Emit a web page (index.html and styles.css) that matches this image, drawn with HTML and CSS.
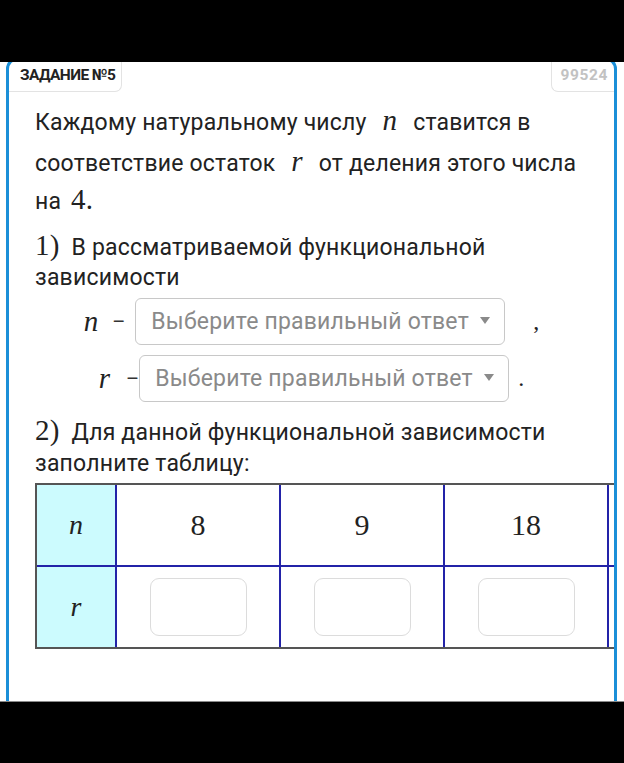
FILE: index.html
```html
<!DOCTYPE html>
<html lang="ru">
<head>
    <meta charset="UTF-8">
    <meta name="viewport" content="width=device-width, initial-scale=1.0">
    <title>Задание №5</title>
    <link rel="stylesheet" href="styles.css">
</head>
<body>
    <div class="bar bar-top"></div>

    <div class="task-card">
        <div class="task-head">
            <span class="task-tag">ЗАДАНИЕ №5</span>
            <span class="task-id">99524</span>
        </div>

        <p class="task-text">
            Каждому натуральному числу <span class="math">n</span> ставится в
            соответствие остаток <span class="math">r</span> от деления этого числа
            на <span class="num">4.</span>
        </p>

        <p class="task-part"><span class="num">1)</span> В рассматриваемой функциональной зависимости</p>

        <div class="answer-row">
            <span class="math">n</span>
            <span class="dash">–</span>
            <div class="select-box">
                <span>Выберите правильный ответ</span>
                <span class="arrow"></span>
            </div>
            <span class="punct">,</span>
        </div>
        <div class="answer-row row-r">
            <span class="math">r</span>
            <span class="dash">–</span>
            <div class="select-box">
                <span>Выберите правильный ответ</span>
                <span class="arrow"></span>
            </div>
            <span class="punct">.</span>
        </div>

        <p class="task-part part-two"><span class="num">2)</span> Для данной функциональной зависимости заполните таблицу:</p>

        <table class="value-table">
            <tr>
                <th><span class="math">n</span></th>
                <td class="num">8</td>
                <td class="num">9</td>
                <td class="num">18</td>
                <td class="num"></td>
            </tr>
            <tr>
                <th><span class="math">r</span></th>
                <td><input type="text" class="cell-input"></td>
                <td><input type="text" class="cell-input"></td>
                <td><input type="text" class="cell-input"></td>
                <td><input type="text" class="cell-input"></td>
            </tr>
        </table>
    </div>

    <div class="bar bar-bottom"></div>
</body>
</html>
```

FILE: styles.css
```css
html, body {
    margin: 0;
    padding: 0;
    background-color: #fff;
}
body {
    font-family: Roboto, "Noto Sans", sans-serif;
    color: #222;
    height: 763px;
    overflow: hidden;
    position: relative;
}
.bar {
    position: absolute;
    left: 0;
    right: 0;
    background-color: #000;
    z-index: 5;
}
.bar-top {
    top: 0;
    height: 62px;
}
.bar-bottom {
    top: 701px;
    height: 62px;
    border-top: 1px solid #8a8a8a;
}
.task-card {
    margin: 57px 7px 0 6px;
    height: 700px;
    border: 3px solid #1b8fd8;
    border-radius: 12px;
    padding: 0 0 0 26px;
    overflow: hidden;
    box-sizing: border-box;
}
.task-head {
    display: flex;
    justify-content: space-between;
    margin-left: -26px;
    height: 32px;
}
.task-tag,
.task-id {
    font-family: Roboto, "Noto Sans", sans-serif;
    font-weight: bold;
    font-size: 15.5px;
    line-height: 31px;
    border: 1px solid #e3e3e3;
    border-top: none;
}
.task-tag {
    letter-spacing: -0.6px;
    padding: 0 6px 0 11px;
    border-left: none;
    border-bottom-right-radius: 7px;
}
.task-id {
    color: #c2c2c2;
    letter-spacing: 0.6px;
    border-right: none;
    border-bottom-left-radius: 7px;
    padding: 0 6px 0 9px;
}
.task-text {
    margin: 9px 26px 0 0;
    font-size: 23px;
    letter-spacing: 0.2px;
    line-height: 38px;
}
.math {
    font-family: "Liberation Serif", "Times New Roman", serif;
    font-style: italic;
    font-size: 29px;
    margin: 0 10px;
}
.num {
    font-family: "Liberation Serif", "Times New Roman", serif;
    font-size: 29px;
    line-height: 1;
}
.task-text .num {
    margin-left: 4px;
}
.task-part {
    margin: 10px 26px 0 0;
    font-size: 23px;
    letter-spacing: 0.2px;
    line-height: 30px;
}
.task-part .num {
    margin-right: 6px;
}
.part-two {
    margin-top: 14px;
    line-height: 31px;
}
.answer-row {
    display: flex;
    align-items: center;
    justify-content: center;
    margin: 5px 26px 0 0;
    height: 47px;
}
.row-r {
    margin-top: 10px;
}
.answer-row .math {
    margin: 0 14px 0 0;
}
.dash {
    font-size: 20px;
    color: #333;
    margin-right: 10px;
}
.row-r .math {
    margin-right: 16px;
}
.row-r .dash {
    margin-right: 0;
}
.select-box {
    display: flex;
    align-items: center;
    justify-content: space-between;
    box-sizing: border-box;
    height: 47px;
    width: 370px;
    padding: 0 14px 0 15px;
    border: 1px solid #c8c8c8;
    border-radius: 6px;
    color: #8a8a8a;
    font-size: 23px;
    letter-spacing: 0.2px;
}
.arrow {
    width: 0;
    height: 0;
    border-left: 5px solid transparent;
    border-right: 5px solid transparent;
    border-top: 7px solid #8a8a8a;
    margin-top: -2px;
}
.punct {
    font-family: "Liberation Serif", serif;
    font-size: 24px;
    margin-left: 28px;
}
.row-r .punct {
    margin-left: 9px;
}
.value-table {
    width: 738px;
    margin-top: 4px;
    border-collapse: separate;
    border-spacing: 0;
    border: 2px solid #555;
    border-right: none;
    table-layout: fixed;
}
.value-table th,
.value-table td {
    height: 80px;
    padding: 0;
    text-align: center;
    border-right: 2px solid #2323a8;
    width: 162px;
}
.value-table tr:first-child th,
.value-table tr:first-child td {
    border-bottom: 2px solid #2323a8;
}
.value-table th {
    width: 78px;
    background-color: #ccfbfe;
    font-weight: normal;
}
.value-table th .math {
    margin: 0;
    font-size: 28px;
}
.value-table td.num {
    color: #222;
    font-size: 30px;
}
.cell-input {
    width: 97px;
    height: 58px;
    box-sizing: border-box;
    border: 1.5px solid #dcdcdc;
    border-radius: 9px;
    background: #fff;
    vertical-align: middle;
}
```
